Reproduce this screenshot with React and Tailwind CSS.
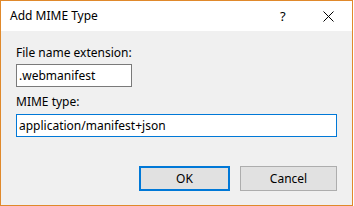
export default function App() {
  return (
    <div className="w-[354px] h-[206px] bg-white">
      <div
        className="w-[353px] h-[206px] border border-[#e0892b] flex flex-col text-black"
        style={{fontFamily: '"Noto Sans", "Open Sans", sans-serif'}}
      >
        {/* title bar */}
        <div className="h-[30px] bg-white flex items-center relative">
          <span className="ml-[9px] text-[12px] leading-[16px]">Add MIME Type</span>
          <span className="absolute left-[279px] top-[6px] text-[13px] leading-[18px]">?</span>
          <svg className="absolute left-[322px] top-[10px]" width="11" height="11" viewBox="0 0 11 11">
            <path d="M0.5 0.5 L10.5 10.5 M10.5 0.5 L0.5 10.5" stroke="#000" strokeWidth="1" fill="none" />
          </svg>
        </div>

        {/* body */}
        <div className="flex-1 bg-[#f0f0f0] px-[15px] flex flex-col">
          <label className="mt-[14px] text-[12px] leading-[16px]">File name extension:</label>
          <div className="mt-[3px] w-[116px] h-[23px] bg-white border border-[#7a7a7a] flex items-center pl-[2px] text-[12px] leading-[16px]">
            .webmanifest
          </div>
          <label className="mt-[7px] text-[12px] leading-[16px]">MIME type:</label>
          <div className="mt-[4px] w-[321px] h-[23px] bg-white border border-[#0078d7] flex items-center pl-[2px] text-[12px] leading-[16px]">
            application/manifest+json
          </div>
          <div className="mt-[29px] flex justify-end gap-[10px] pr-[0px]">
            <button className="w-[91px] h-[25px] bg-[#e1e1e1] border-2 border-[#0078d7] text-[12px] leading-[16px] flex items-center justify-center">
              OK
            </button>
            <button className="w-[97px] h-[25px] bg-[#e1e1e1] border border-[#adadad] text-[12px] leading-[16px] flex items-center justify-center">
              Cancel
            </button>
          </div>
        </div>
      </div>
    </div>
  );
}
